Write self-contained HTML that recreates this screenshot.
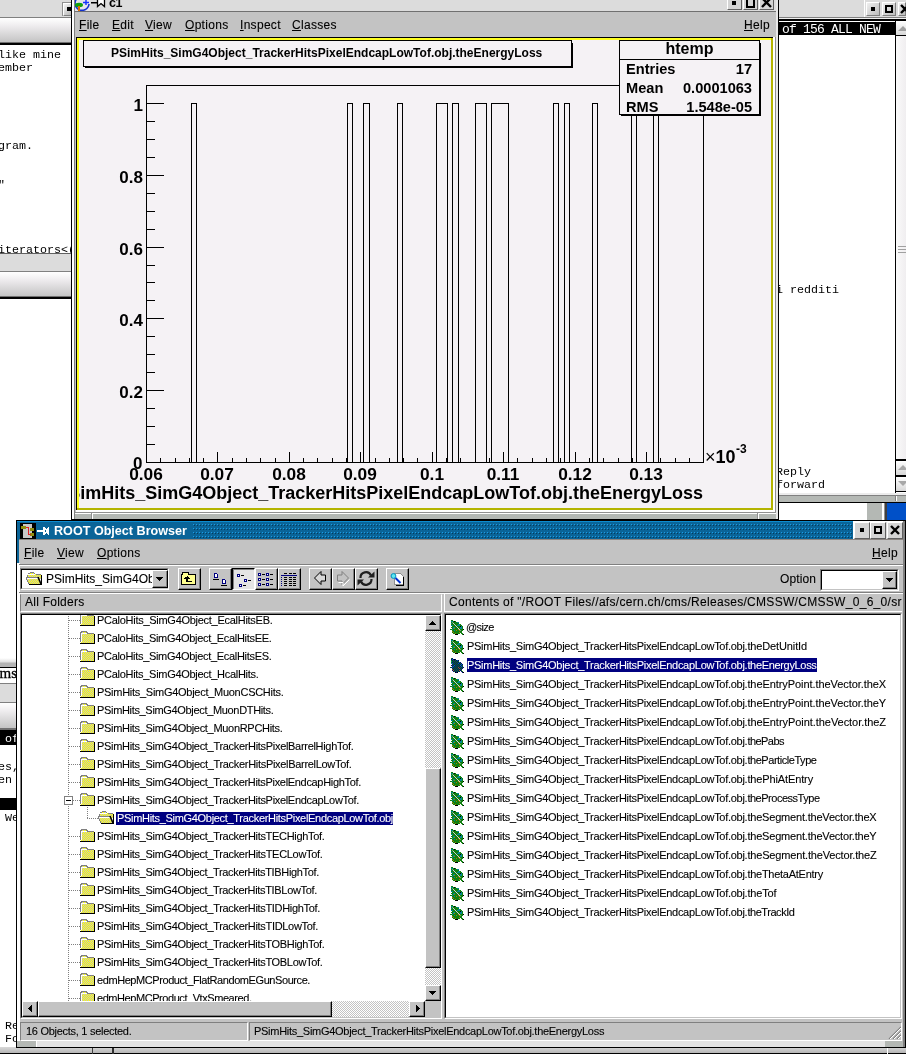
<!DOCTYPE html><html><head><meta charset="utf-8"><title>ROOT Object Browser</title><style>
html,body{margin:0;padding:0}
body{width:906px;height:1054px;overflow:hidden;background:#fff;position:relative;font-family:"Liberation Sans",sans-serif;font-size:12px;color:#000}
div,span,svg{position:absolute;box-sizing:border-box}
.t{white-space:pre;line-height:1}
.mono{font-family:"Liberation Mono",monospace;font-size:11.67px;white-space:pre;line-height:13px}
.ui{-webkit-text-stroke:0.1px currentColor;font-size:12px;white-space:pre;line-height:14px}
.li{-webkit-text-stroke:0.1px currentColor;font-size:11px;letter-spacing:-0.28px;white-space:pre;line-height:14px}
.b{font-weight:bold}
u{text-decoration:underline}
.btn{background:#c3c3c3;border:1px solid;border-color:#fff #000 #000 #fff;box-shadow:inset -1px -1px 0 #808080}
.btnp{border:1px solid;border-color:#000 #fff #fff #000;box-shadow:inset 1px 1px 0 #808080;background:#e4e4e4}
.sunk{border:1px solid;border-color:#808080 #fff #fff #808080;}
.sunk2{border:1px solid;border-color:#000 #c3c3c3 #c3c3c3 #000;background:#fff}
.wb{background:#d4d4d4;border:1px solid;border-color:#fff #606060 #606060 #fff}
</style></head><body><div style="left:0;top:0;width:906px;height:1054px;overflow:hidden;will-change:transform;background:#fff">
<div class="" style="left:0px;top:0px;width:72px;height:17px;background:#dcdcdc"></div>
<div class="" style="left:62px;top:2px;width:10px;height:14px;background:#909090"></div>
<div class="" style="left:63px;top:3px;width:9px;height:13px;background:linear-gradient(135deg,#f4f4f4,#b8b8b8);border:1px solid;border-color:#fff #808080 #808080 #fff"></div>
<div class="" style="left:67px;top:7px;width:5px;height:4px;background:#000"></div>
<div class="" style="left:0px;top:17px;width:72px;height:1px;background:#808080"></div>
<div class="" style="left:0px;top:18px;width:72px;height:24px;background:linear-gradient(#ffffff,#f0eef0 30%,#c4c4c4)"></div>
<div class="" style="left:0px;top:42px;width:72px;height:1px;background:#707070"></div>
<div class="" style="left:0px;top:43px;width:72px;height:2px;background:#000"></div>
<span class="mono" style="left:-2px;top:49px;">like mine</span>
<span class="mono" style="left:-2px;top:62px;">ember</span>
<span class="mono" style="left:-2px;top:140px;">gram.</span>
<span class="mono" style="left:-2px;top:179px;">"</span>
<span class="mono" style="left:-2px;top:244px;">iterators&lt;(</span>
<div class="" style="left:0px;top:253px;width:71px;height:1px;background:#606060"></div>
<div class="" style="left:0px;top:254px;width:71px;height:17px;background:#dcdcdc"></div>
<div class="" style="left:0px;top:271px;width:71px;height:1px;background:#808080"></div>
<div class="" style="left:0px;top:272px;width:71px;height:24px;background:linear-gradient(#ffffff,#f0eef0 30%,#c4c4c4)"></div>
<div class="" style="left:0px;top:296px;width:71px;height:1px;background:#707070"></div>
<div class="" style="left:0px;top:297px;width:71px;height:2px;background:#000"></div>
<div class="" style="left:0px;top:658px;width:16px;height:9px;background:linear-gradient(#ffffff,#e0e0e0 45%,#b4b4b4 55%,#b4b4b4)"></div>
<div class="" style="left:0px;top:667px;width:16px;height:1px;background:#000"></div>
<div style="left:0;top:668px;width:16px;height:15px;overflow:hidden"><span class="t" style="right:-1px;top:-2px;font-family:'Liberation Serif',serif;font-size:15px;-webkit-text-stroke:0.3px #000">ms</span></div>
<div class="" style="left:0px;top:683px;width:16px;height:1px;background:#808080"></div>
<div class="" style="left:0px;top:684px;width:16px;height:18px;background:#dcdcdc"></div>
<div class="" style="left:0px;top:702px;width:16px;height:1px;background:#808080"></div>
<div class="" style="left:0px;top:703px;width:16px;height:25px;background:linear-gradient(#ffffff,#f0eef0 30%,#c4c4c4)"></div>
<div class="" style="left:0px;top:728px;width:16px;height:2px;background:#707070"></div>
<div class="" style="left:0px;top:730px;width:16px;height:15px;background:#000"></div>
<span class="mono" style="left:5px;top:733px;color:#fff">of</span>
<span class="mono" style="left:-2px;top:761px;">es,</span>
<span class="mono" style="left:-2px;top:774px;">en</span>
<div class="" style="left:0px;top:798px;width:16px;height:12px;background:#000"></div>
<span class="mono" style="left:5px;top:812px;">We</span>
<span class="mono" style="left:5px;top:1020px;">Re</span>
<span class="mono" style="left:5px;top:1033px;">Fo</span>
<div class="" style="left:778px;top:0px;width:128px;height:17px;background:#dcdcdc"></div>
<div class="" style="left:864px;top:0px;width:1px;height:17px;background:#fff"></div>
<div class="" style="left:866px;top:2px;width:14px;height:14px;background:linear-gradient(135deg,#f0f0f0,#bcbcbc);border:1px solid;border-color:#fff #808080 #808080 #fff"></div>
<div class="" style="left:882px;top:2px;width:14px;height:14px;background:linear-gradient(135deg,#f0f0f0,#bcbcbc);border:1px solid;border-color:#fff #808080 #808080 #fff"></div>
<div class="" style="left:898px;top:2px;width:8px;height:14px;background:linear-gradient(135deg,#f0f0f0,#bcbcbc);border:1px solid;border-color:#fff #808080 #808080 #fff"></div>
<div class="" style="left:871px;top:7px;width:4px;height:4px;background:#000"></div>
<div class="" style="left:885px;top:5px;width:8px;height:8px;border:2px solid #000"></div>
<svg style="left:900px;top:4px" width="6" height="10"><path d="M1 1L9 9M9 1L1 9" stroke="#000" stroke-width="2.4"/></svg>
<div class="" style="left:778px;top:17px;width:128px;height:1px;background:#808080"></div>
<div class="" style="left:778px;top:18px;width:128px;height:1px;background:#f0f0f0"></div>
<div class="" style="left:778px;top:19px;width:128px;height:2px;background:#000"></div>
<div class="" style="left:779px;top:21px;width:116px;height:1px;background:#fff"></div>
<div class="" style="left:778px;top:22px;width:117px;height:13px;background:#000"></div>
<span class="mono" style="left:782px;top:22.5px;color:#fff;font-size:13px;letter-spacing:-0.8px">of 156 ALL NEW</span>
<div class="" style="left:778px;top:21px;width:1px;height:482px;background:#000"></div>
<div class="" style="left:895px;top:21px;width:1px;height:475px;background:#000"></div>
<div class="" style="left:896px;top:21px;width:10px;height:475px;background:linear-gradient(90deg,#fafafa,#f0eef0)"></div>
<div class="" style="left:896px;top:21px;width:10px;height:15px;background:linear-gradient(#fff,#d8d8d8);border-bottom:1px solid #000"></div>
<svg style="left:898px;top:26px" width="8" height="5"><path d="M0 5L5 0L10 5z" fill="#a0a0a0"/></svg>
<span class="mono" style="left:776px;top:283.5px;">i redditi</span>
<span class="mono" style="left:776px;top:465.5px;">Reply</span>
<span class="mono" style="left:776px;top:478.5px;">forward</span>
<div class="" style="left:898px;top:246px;width:8px;height:1px;background:#a0a0a0"></div>
<div class="" style="left:898px;top:249px;width:8px;height:1px;background:#a0a0a0"></div>
<div class="" style="left:898px;top:252px;width:8px;height:1px;background:#a0a0a0"></div>
<div class="" style="left:896px;top:459px;width:10px;height:2px;background:#000"></div>
<div class="" style="left:896px;top:461px;width:10px;height:14px;background:linear-gradient(#fff,#d8d8d8)"></div>
<svg style="left:898px;top:465px" width="8" height="6"><path d="M0 5L5 0L10 5z" fill="#a8a8a8"/></svg>
<div class="" style="left:896px;top:475px;width:10px;height:2px;background:#000"></div>
<div class="" style="left:896px;top:477px;width:10px;height:14px;background:linear-gradient(#fff,#d8d8d8)"></div>
<svg style="left:898px;top:481px" width="8" height="6"><path d="M0 0L5 5L10 0z" fill="#a8a8a8"/></svg>
<div class="" style="left:896px;top:491px;width:10px;height:1px;background:#000"></div>
<div class="" style="left:896px;top:492px;width:10px;height:2px;background:#fff"></div>
<div class="" style="left:778px;top:493px;width:128px;height:2px;background:#ececec"></div>
<div class="" style="left:778px;top:495px;width:128px;height:1px;background:#808080"></div>
<div class="" style="left:778px;top:496px;width:128px;height:6px;background:#b4b8b4"></div>
<div class="" style="left:895px;top:496px;width:1px;height:5px;background:#808080"></div>
<div class="" style="left:896px;top:496px;width:1px;height:5px;background:#fff"></div>
<div class="" style="left:778px;top:502px;width:128px;height:1px;background:#000"></div>
<div class="" style="left:778px;top:503px;width:89px;height:17px;background:#fff"></div>
<div class="" style="left:867px;top:503px;width:15px;height:17px;background:#b4b8b4"></div>
<div class="" style="left:882px;top:503px;width:2px;height:17px;background:#fff"></div>
<div class="" style="left:884px;top:503px;width:1px;height:17px;background:#909090"></div>
<div class="" style="left:885px;top:503px;width:2px;height:17px;background:#404040"></div>
<div class="" style="left:887px;top:503px;width:19px;height:17px;background:#0050c8"></div>
<div class="" style="left:71px;top:0px;width:708px;height:520px;background:#c3c3c3"></div>
<div class="" style="left:71px;top:0px;width:1px;height:520px;background:#000"></div>
<div class="" style="left:72px;top:0px;width:2px;height:519px;background:#fff"></div>
<div class="" style="left:74px;top:0px;width:1px;height:519px;background:#808080"></div>
<div class="" style="left:778px;top:0px;width:1px;height:520px;background:#000"></div>
<div class="" style="left:776px;top:0px;width:2px;height:519px;background:#e8e8e8"></div>
<div class="" style="left:75px;top:0px;width:701px;height:11px;background:#dcdcdc"></div>
<div class="" style="left:74px;top:11px;width:702px;height:1px;background:#707070"></div>
<div class="" style="left:75px;top:12px;width:701px;height:25px;background:#c3c3c3"></div>
<svg style="left:75px;top:0px" width="32" height="11"><rect x="0" y="0" width="15" height="11" fill="#e4e4ec"/><path d="M4 -3a7 7 0 1 0 10 7" fill="none" stroke="#1030d0" stroke-width="1.6"/><path d="M8 2.500h6M11 0v5" stroke="#1030ff" stroke-width="1.4"/><ellipse cx="4" cy="5" rx="4" ry="2.200" fill="#10a010"/><rect x="3" y="6" width="2" height="5" fill="#e07000"/><rect x="16" y="2" width="6" height="1.500" fill="#000"/><path d="M22.500 -1v7.500l3.500-3 3.500 3v-7.500" fill="#fff" stroke="#000" stroke-width="1.300"/></svg>
<span class="t b" style="left:109px;top:-3px;font-size:12.5px;letter-spacing:-0.5px">c1</span>
<div class="wb" style="left:727px;top:-4px;width:15px;height:14px;"></div>
<div class="wb" style="left:743px;top:-4px;width:15px;height:14px;"></div>
<div class="wb" style="left:759px;top:-4px;width:15px;height:14px;"></div>
<div class="" style="left:732px;top:1px;width:4px;height:4px;background:#000"></div>
<div class="" style="left:746px;top:-2px;width:9px;height:10px;border:2px solid #000"></div>
<svg style="left:761px;top:-1px" width="11" height="10"><path d="M1 -1L10 8M10 -1L1 8" stroke="#000" stroke-width="2.4"/></svg>
<span class="ui" style="left:79px;top:18px;letter-spacing:0.3px"><u>F</u>ile</span>
<span class="ui" style="left:112px;top:18px;letter-spacing:0.3px"><u>E</u>dit</span>
<span class="ui" style="left:145px;top:18px;letter-spacing:0.3px"><u>V</u>iew</span>
<span class="ui" style="left:185px;top:18px;letter-spacing:0.3px"><u>O</u>ptions</span>
<span class="ui" style="left:240px;top:18px;letter-spacing:0.3px"><u>I</u>nspect</span>
<span class="ui" style="left:292px;top:18px;letter-spacing:0.3px"><u>C</u>lasses</span>
<span class="ui" style="left:744px;top:18px;letter-spacing:0.3px"><u>H</u>elp</span>
<div class="" style="left:76px;top:37px;width:699px;height:475px;background:#fff"></div>
<div class="" style="left:76px;top:37px;width:697px;height:473px;background:#000"></div>
<div class="" style="left:77px;top:38px;width:696px;height:472px;background:#b4b400"></div>
<div class="" style="left:77px;top:38px;width:694px;height:470px;background:#ffff20"></div>
<svg style="left:769px;top:36px" width="6" height="6" shape-rendering="crispEdges"><path d="M4 2v2h-2z" fill="#b4b400"/></svg>
<svg style="left:75px;top:506px" width="6" height="6" shape-rendering="crispEdges"><path d="M2 4h2v-2z" fill="#b4b400"/></svg>
<div class="" style="left:79px;top:40px;width:692px;height:468px;background:#f5f2f5"></div>
<div class="" style="left:75px;top:512px;width:701px;height:1px;background:#909090"></div>
<div class="" style="left:75px;top:513px;width:701px;height:1px;background:#fff"></div>
<div class="" style="left:75px;top:514px;width:701px;height:5px;background:#b4b8b4"></div>
<div class="" style="left:91px;top:513px;width:1px;height:6px;background:#909090"></div>
<div class="" style="left:92px;top:513px;width:1px;height:6px;background:#fff"></div>
<div class="" style="left:757px;top:513px;width:1px;height:6px;background:#909090"></div>
<div class="" style="left:758px;top:513px;width:1px;height:6px;background:#fff"></div>
<div class="" style="left:775px;top:37px;width:1px;height:476px;background:#909090"></div>
<div class="" style="left:71px;top:519px;width:708px;height:1px;background:#000"></div>
<div class="" style="left:85px;top:43px;width:488px;height:25px;background:#000"></div>
<div class="" style="left:83px;top:40px;width:489px;height:27px;background:#f5f2f5;border:1px solid #000"></div>
<span class="t b" style="left:111px;top:47px;font-size:12px">PSimHits_SimG4Object_TrackerHitsPixelEndcapLowTof.obj.theEnergyLoss</span>
<svg style="left:0;top:0" width="906" height="520" shape-rendering="crispEdges" fill="none" stroke="#000" stroke-width="1"><rect x="146.500" y="85.500" width="557" height="377"/><path d="M191.5 462.5V103.5H196.5V462.5"/><path d="M347.5 462.5V103.5H352.5V462.5"/><path d="M363.5 462.5V103.5H369.5V462.5"/><path d="M397.5 462.5V103.5H402.5V462.5"/><path d="M436.5 462.5V103.5H447.5V462.5"/><path d="M452.5 462.5V103.5H458.5V462.5"/><path d="M475.5 462.5V103.5H486.5V462.5"/><path d="M491.5 462.5V103.5H508.5V462.5"/><path d="M553.5 462.5V103.5H558.5V462.5"/><path d="M564.5 462.5V103.5H569.5V462.5"/><path d="M592.5 462.5V103.5H597.5V462.5"/><path d="M631.5 462.5V103.5H636.5V462.5"/><path d="M653.5 462.5V103.5H658.5V462.5"/><path d="M146.500 462.5h17"/><path d="M146.500 444.5h8"/><path d="M146.500 426.5h8"/><path d="M146.500 408.5h8"/><path d="M146.500 390.5h17"/><path d="M146.500 372.5h8"/><path d="M146.500 354.5h8"/><path d="M146.500 336.5h8"/><path d="M146.500 318.5h17"/><path d="M146.500 300.5h8"/><path d="M146.500 282.5h8"/><path d="M146.500 265.5h8"/><path d="M146.500 247.5h17"/><path d="M146.500 229.5h8"/><path d="M146.500 211.5h8"/><path d="M146.500 193.5h8"/><path d="M146.500 175.5h17"/><path d="M146.500 157.5h8"/><path d="M146.500 139.5h8"/><path d="M146.500 121.5h8"/><path d="M146.500 103.5h17"/><path d="M146.5 462.500v-11"/><path d="M160.5 462.500v-5"/><path d="M175.5 462.500v-5"/><path d="M189.5 462.500v-5"/><path d="M203.5 462.500v-5"/><path d="M217.5 462.500v-11"/><path d="M232.5 462.500v-5"/><path d="M246.5 462.500v-5"/><path d="M260.5 462.500v-5"/><path d="M275.5 462.500v-5"/><path d="M289.5 462.500v-11"/><path d="M303.5 462.500v-5"/><path d="M317.5 462.500v-5"/><path d="M332.5 462.500v-5"/><path d="M346.5 462.500v-5"/><path d="M360.5 462.500v-11"/><path d="M375.5 462.500v-5"/><path d="M389.5 462.500v-5"/><path d="M403.5 462.500v-5"/><path d="M417.5 462.500v-5"/><path d="M432.5 462.500v-11"/><path d="M446.5 462.500v-5"/><path d="M460.5 462.500v-5"/><path d="M475.5 462.500v-5"/><path d="M489.5 462.500v-5"/><path d="M503.5 462.500v-11"/><path d="M517.5 462.500v-5"/><path d="M532.5 462.500v-5"/><path d="M546.5 462.500v-5"/><path d="M560.5 462.500v-5"/><path d="M575.5 462.500v-11"/><path d="M589.5 462.500v-5"/><path d="M603.5 462.500v-5"/><path d="M618.5 462.500v-5"/><path d="M632.5 462.500v-5"/><path d="M646.5 462.500v-11"/><path d="M660.5 462.500v-5"/><path d="M675.5 462.500v-5"/><path d="M689.5 462.500v-5"/></svg>
<span class="t b" style="left:133px;top:455px;font-size:17px">0</span>
<span class="t b" style="right:763px;top:384px;font-size:17px">0.2</span>
<span class="t b" style="right:763px;top:312px;font-size:17px">0.4</span>
<span class="t b" style="right:763px;top:241px;font-size:17px">0.6</span>
<span class="t b" style="right:763px;top:169px;font-size:17px">0.8</span>
<span class="t b" style="right:763px;top:97px;font-size:17px">1</span>
<span class="t b" style="left:96px;width:100px;text-align:center;top:466px;font-size:17.3px">0.06</span>
<span class="t b" style="left:167px;width:100px;text-align:center;top:466px;font-size:17.3px">0.07</span>
<span class="t b" style="left:239px;width:100px;text-align:center;top:466px;font-size:17.3px">0.08</span>
<span class="t b" style="left:310px;width:100px;text-align:center;top:466px;font-size:17.3px">0.09</span>
<span class="t b" style="left:382px;width:100px;text-align:center;top:466px;font-size:17.3px">0.1</span>
<span class="t b" style="left:453px;width:100px;text-align:center;top:466px;font-size:17.3px">0.11</span>
<span class="t b" style="left:525px;width:100px;text-align:center;top:466px;font-size:17.3px">0.12</span>
<span class="t b" style="left:596px;width:100px;text-align:center;top:466px;font-size:17.3px">0.13</span>
<span class="t b" style="left:705px;top:448px;font-size:18px"><em style="font-style:normal;font-weight:normal;font-size:18px">×</em>10</span>
<span class="t b" style="left:736px;top:443px;font-size:12px">-3</span>
<div style="left:79px;top:480px;width:692px;height:28px;overflow:hidden"><span class="t b" style="right:68px;top:4px;font-size:18px">PSimHits_SimG4Object_TrackerHitsPixelEndcapLowTof.obj.theEnergyLoss</span></div>
<div class="" style="left:621px;top:43px;width:140px;height:73px;background:#000"></div>
<div class="" style="left:619px;top:40px;width:141px;height:75px;background:#f5f2f5;border:1px solid #000"></div>
<div class="" style="left:619px;top:59px;width:141px;height:1px;background:#000"></div>
<span class="t b" style="left:619px;width:141px;text-align:center;top:41px;font-size:16px">htemp</span>
<span class="t b" style="left:626px;top:62px;font-size:14.6px">Entries</span>
<span class="t b" style="right:154px;top:62px;font-size:14.6px">17</span>
<span class="t b" style="left:626px;top:81px;font-size:14.6px">Mean</span>
<span class="t b" style="right:154px;top:81px;font-size:14.6px">0.0001063</span>
<span class="t b" style="left:626px;top:100px;font-size:14.6px">RMS</span>
<span class="t b" style="right:154px;top:100px;font-size:14.6px">1.548e-05</span>
<div class="" style="left:0px;top:1047px;width:906px;height:7px;background:linear-gradient(#d8d8d8,#b0b0b0)"></div>
<div class="" style="left:0px;top:1053px;width:906px;height:1px;background:#000"></div>
<div class="" style="left:92px;top:1048px;width:1px;height:6px;background:#404040"></div>
<div class="" style="left:112px;top:1048px;width:2px;height:6px;background:#303030"></div>
<div class="" style="left:887px;top:1048px;width:1px;height:6px;background:#fff"></div>
<div class="" style="left:16px;top:520px;width:890px;height:528px;background:#c3c3c3;border:1px solid #000"></div>
<div class="" style="left:17px;top:521px;width:2px;height:42px;background:#0a6498"></div>
<div class="" style="left:17px;top:563px;width:3px;height:484px;background:#fff"></div>
<div class="" style="left:903px;top:521px;width:2px;height:526px;background:#808080"></div>
<div class="" style="left:17px;top:1041px;width:886px;height:6px;background:#e4e4e4"></div>
<div class="" style="left:17px;top:1041px;width:19px;height:6px;background:#b4b8b4"></div>
<div class="" style="left:36px;top:1041px;width:1px;height:6px;background:#fff"></div>
<div class="" style="left:885px;top:1041px;width:18px;height:6px;background:#b4b8b4"></div>
<div class="" style="left:16px;top:1047px;width:890px;height:1px;background:#000"></div>
<div class="" style="left:17px;top:521px;width:886px;height:1px;background:#0c8cd0"></div>
<div class="" style="left:19px;top:522px;width:884px;height:17px;background:#0a6498"></div>
<div class="" style="left:19px;top:539px;width:884px;height:1px;background:#8a8480"></div>
<svg style="left:193px;top:524px" width="660" height="15" shape-rendering="crispEdges"><defs><pattern id="tdots" width="3" height="4" patternUnits="userSpaceOnUse"><rect x="0" y="0" width="1" height="1" fill="#1c9ce4"/><rect x="1" y="1" width="1" height="1" fill="#063c5c"/></pattern></defs><rect width="660" height="15" fill="url(#tdots)"/></svg>
<svg style="left:20px;top:523px" width="30" height="16" shape-rendering="crispEdges"><rect x="0" y="0" width="16" height="16" fill="#000"/><rect x="3" y="1" width="9" height="14" fill="#c8c8c8"/><rect x="1" y="3" width="5" height="3" fill="#909010"/><rect x="10" y="5" width="4" height="3" fill="#909010"/><rect x="10" y="10" width="4" height="3" fill="#909010"/><path d="M6 4.500h2.500v7h2" stroke="#e02020" fill="none"/><rect x="17" y="7" width="6" height="2" fill="#fff"/><path d="M23 4h2v1h1v1h1v-1h1v-1h1v8h-1v-1h-1v-1h-1v1h-1v1h-2z M25 7v2h1v-2z" fill="#fff" fill-rule="evenodd"/></svg>
<span class="t b" style="left:54px;top:525px;font-size:12.6px;color:#fff">ROOT Object Browser</span>
<div class="" style="left:853px;top:521px;width:50px;height:18px;background:#dcdcdc;border-left:1px solid #fff;border-top:1px solid #fff"></div>
<div class="wb" style="left:854px;top:522px;width:16px;height:17px;"></div>
<div class="wb" style="left:870px;top:522px;width:16px;height:17px;"></div>
<div class="wb" style="left:887px;top:522px;width:16px;height:17px;"></div>
<div class="" style="left:860px;top:528px;width:4px;height:4px;background:#000"></div>
<div class="" style="left:874px;top:526px;width:8px;height:8px;border:2px solid #000"></div>
<svg style="left:890px;top:525px" width="10" height="10"><path d="M1 1L9 9M9 1L1 9" stroke="#000" stroke-width="2.4"/></svg>
<span class="ui" style="left:24px;top:546px;letter-spacing:0.3px"><u>F</u>ile</span>
<span class="ui" style="left:57px;top:546px;letter-spacing:0.3px"><u>V</u>iew</span>
<span class="ui" style="left:97px;top:546px;letter-spacing:0.3px"><u>O</u>ptions</span>
<span class="ui" style="left:872px;top:546px;letter-spacing:0.3px"><u>H</u>elp</span>
<div class="" style="left:19px;top:564px;width:884px;height:1px;background:#808080"></div>
<div class="" style="left:19px;top:565px;width:884px;height:1px;background:#fff"></div>
<div class="sunk" style="left:20px;top:568px;width:149px;height:22px;"></div>
<div class="sunk2" style="left:21px;top:569px;width:147px;height:20px;"></div>
<div style="left:22px;top:570px;width:130px;height:18px;overflow:hidden;background:#fff"><span class="ui" style="left:24px;top:2px;letter-spacing:0px">PSimHits_SimG4Object_TrackerHitsPixelEndcapLowTof.obj</span></div>
<div class="btn" style="left:152px;top:570px;width:16px;height:18px;"></div>
<svg style="left:156px;top:577px" width="8" height="4" shape-rendering="crispEdges"><path d="M0 0h7l-3.500 4z" fill="#000"/></svg>
<div class="btn" style="left:178px;top:568px;width:23px;height:22px;"></div>
<div class="btn" style="left:209px;top:568px;width:23px;height:22px;"></div>
<div class="btn" style="left:255px;top:568px;width:23px;height:22px;"></div>
<div class="btn" style="left:278px;top:568px;width:23px;height:22px;"></div>
<div class="btn" style="left:309px;top:568px;width:23px;height:22px;"></div>
<div class="btn" style="left:332px;top:568px;width:23px;height:22px;"></div>
<div class="btn" style="left:355px;top:568px;width:23px;height:22px;"></div>
<div class="btn" style="left:386px;top:568px;width:23px;height:22px;"></div>
<div class="btnp" style="left:232px;top:568px;width:23px;height:22px;"></div>
<svg style="left:0;top:0" width="906" height="600" shape-rendering="crispEdges"><path d="M181.500 584.500v-10h1v-2h6v2h7v10z" fill="#ffff90" stroke="#000"/><path d="M187 576h1v1h1v1h1v1h-2v2h4v1h-6v-3h-2v-1h1v-1h1z" fill="#000"/><path d="M214.500 573.500h2l1 1v3h-3z" fill="#fff" stroke="#000080" stroke-width="1"/><rect x="213" y="579" width="6" height="1" fill="#000"/><path d="M222.500 579.500h2l1 1v3h-3z" fill="#fff" stroke="#000080" stroke-width="1"/><rect x="221" y="585" width="6" height="1" fill="#000"/><rect x="237.500" y="574.500" width="2" height="2" fill="#fff" stroke="#000080"/><rect x="241" y="575" width="3" height="1" fill="#000"/><rect x="244.500" y="579.500" width="2" height="2" fill="#fff" stroke="#000080"/><rect x="248" y="580" width="3" height="1" fill="#000"/><rect x="239.500" y="584.500" width="2" height="2" fill="#fff" stroke="#000080"/><rect x="243" y="585" width="3" height="1" fill="#000"/><rect x="258.500" y="573.500" width="2" height="2" fill="#fff" stroke="#000080"/><rect x="262" y="574" width="3" height="1" fill="#000"/><rect x="266.500" y="573.500" width="2" height="2" fill="#fff" stroke="#000080"/><rect x="270" y="574" width="3" height="1" fill="#000"/><rect x="258.500" y="578.500" width="2" height="2" fill="#fff" stroke="#000080"/><rect x="262" y="579" width="3" height="1" fill="#000"/><rect x="266.500" y="578.500" width="2" height="2" fill="#fff" stroke="#000080"/><rect x="270" y="579" width="3" height="1" fill="#000"/><rect x="258.500" y="583.500" width="2" height="2" fill="#fff" stroke="#000080"/><rect x="262" y="584" width="3" height="1" fill="#000"/><rect x="266.500" y="583.500" width="2" height="2" fill="#fff" stroke="#000080"/><rect x="270" y="584" width="3" height="1" fill="#000"/><rect x="284" y="573" width="3" height="1" fill="#000"/><rect x="289" y="573" width="3" height="1" fill="#000"/><rect x="293" y="573" width="3" height="1" fill="#000"/><rect x="281" y="575" width="16" height="1" fill="#000080"/><rect x="281" y="577" width="1" height="1" fill="#000080"/><rect x="284" y="577" width="3" height="1" fill="#000"/><rect x="289" y="577" width="3" height="1" fill="#000"/><rect x="293" y="577" width="3" height="1" fill="#000"/><rect x="281" y="579" width="1" height="1" fill="#000080"/><rect x="284" y="579" width="3" height="1" fill="#000"/><rect x="289" y="579" width="3" height="1" fill="#000"/><rect x="293" y="579" width="3" height="1" fill="#000"/><rect x="281" y="581" width="1" height="1" fill="#000080"/><rect x="284" y="581" width="3" height="1" fill="#000"/><rect x="289" y="581" width="3" height="1" fill="#000"/><rect x="293" y="581" width="3" height="1" fill="#000"/><rect x="281" y="583" width="1" height="1" fill="#000080"/><rect x="284" y="583" width="3" height="1" fill="#000"/><rect x="289" y="583" width="3" height="1" fill="#000"/><rect x="293" y="583" width="3" height="1" fill="#000"/><rect x="281" y="585" width="1" height="1" fill="#000080"/><rect x="284" y="585" width="3" height="1" fill="#000"/><rect x="289" y="585" width="3" height="1" fill="#000"/><rect x="293" y="585" width="3" height="1" fill="#000"/><path d="M314.500 578l6.500-6.500v3.500h4.500v6h-4.500v3.500z" fill="#d8d8d8" stroke="#000" shape-rendering="auto"/><path d="M348.500 578l-6.500-6.500v3.500h-4.500v6h4.500v3.500z" fill="#c3c3c3" stroke="#808080" shape-rendering="auto"/><path d="M337.500 581.500h4.500v3.500l6.500-6.500" fill="none" stroke="#fff" shape-rendering="auto" transform="translate(1,1)"/><g shape-rendering="auto" fill="none" stroke="#202020" stroke-width="2.200"><path d="M360.500 578a5.500 5.500 0 0 1 10.500-2.500"/><path d="M371.500 579a5.500 5.500 0 0 1 -10.500 2.500"/></g><path d="M368 577.500h6.500v-6z M364 579.500h-6.500v6z" fill="#202020" shape-rendering="auto"/><path d="M394.500 573.500h6l3 3v8h-9z" fill="#fff" stroke="#909090"/><path d="M403.500 577v8.500h-8" fill="none" stroke="#000"/><circle cx="393.500" cy="576" r="2.400" fill="#60e8f0" stroke="#0090c0" shape-rendering="auto"/><path d="M395.500 578l5 5" stroke="#0030d0" stroke-width="2" shape-rendering="auto"/></svg>
<span class="ui" style="left:780px;top:572px;letter-spacing:0.1px">Option</span>
<div class="sunk" style="left:820px;top:569px;width:79px;height:22px;"></div>
<div class="sunk2" style="left:821px;top:570px;width:77px;height:20px;"></div>
<div class="btn" style="left:882px;top:571px;width:15px;height:18px;"></div>
<svg style="left:886px;top:578px" width="8" height="4" shape-rendering="crispEdges"><path d="M0 0h7l-3.500 4z" fill="#000"/></svg>
<div class="" style="left:19px;top:592px;width:884px;height:1px;background:#808080"></div>
<div class="" style="left:19px;top:593px;width:884px;height:1px;background:#fff"></div>
<div class="" style="left:20px;top:594px;width:422px;height:18px;background:#c3c3c3;border:1px solid;border-color:#c3c3c3 #fff #fff #808080"></div>
<span class="ui" style="left:25px;top:595px;letter-spacing:0.25px">All Folders</span>
<div style="left:444px;top:594px;width:458px;height:18px;overflow:hidden;border-bottom:1px solid #fff"><div style="left:0;top:0;width:1px;height:18px;background:#fff"></div><span class="ui" style="left:5px;top:1px;letter-spacing:0.3px">Contents of "/ROOT Files//afs/cern.ch/cms/Releases/CMSSW/CMSSW_0_6_0/src</span></div>
<div class="sunk" style="left:20px;top:613px;width:422px;height:406px;"></div>
<div class="sunk2" style="left:21px;top:614px;width:420px;height:404px;"></div>
<svg width="0" height="0" style="left:0;top:0"><defs><pattern id="dy" width="2" height="2" patternUnits="userSpaceOnUse"><rect width="2" height="2" fill="#ffff00"/><rect width="1" height="1" fill="#c4c4c0"/><rect x="1" y="1" width="1" height="1" fill="#c4c4c0"/></pattern><pattern id="nv" width="2" height="2" patternUnits="userSpaceOnUse"><rect width="1" height="1" fill="#000080"/><rect x="1" y="1" width="1" height="1" fill="#000080"/></pattern><g id="fclosed" shape-rendering="crispEdges"><path d="M0.500 12V3.500l1-2h5l1 2h6V12" fill="url(#dy)" stroke="#808080"/><rect x="1" y="4" width="13" height="9" fill="url(#dy)"/><path d="M1 3.500h6M1.500 3v9" stroke="#fff"/><path d="M14.500 4v9.500H0" fill="none" stroke="#000"/></g><g id="fopen" shape-rendering="crispEdges"><path d="M3 7V4l2-2h4l2 2h5v4z" fill="url(#dy)"/><path d="M3 3.500h7" stroke="#fff"/><path d="M2.500 7V3.500M3.500 2.500h1M4.500 1.500h4M9.500 2.500h-1M10.500 3.500h5" stroke="#808080" fill="none"/><rect x="3" y="2" width="1" height="1" fill="#808080"/><rect x="9" y="2" width="1" height="1" fill="#808080"/><path d="M1 6h12l3 7H4z" fill="url(#dy)"/><path d="M2 7.500h11" stroke="#fff"/><path d="M1 6.500h12" stroke="#808080"/><path d="M1.500 7v2M2.500 9v2M3.500 11v2" stroke="#808080"/><path d="M13 6l3 7" stroke="#000" stroke-width="1.600" shape-rendering="auto"/><path d="M16.500 4v10M4 13.500h13" stroke="#000"/></g><g id="leaf" shape-rendering="crispEdges"><rect x="1" y="0" width="2" height="1" fill="#108010"/><rect x="1" y="1" width="5" height="1" fill="#108010"/><rect x="1" y="2" width="8" height="1" fill="#108010"/><rect x="2" y="3" width="7" height="1" fill="#108010"/><rect x="1" y="4" width="10" height="1" fill="#108010"/><rect x="2" y="5" width="10" height="1" fill="#108010"/><rect x="2" y="6" width="11" height="1" fill="#108010"/><rect x="1" y="7" width="12" height="1" fill="#108010"/><rect x="2" y="8" width="11" height="1" fill="#108010"/><rect x="0" y="9" width="14" height="1" fill="#108010"/><rect x="2" y="10" width="11" height="1" fill="#108010"/><rect x="2" y="11" width="10" height="1" fill="#108010"/><rect x="2" y="12" width="9" height="1" fill="#108010"/><rect x="3" y="13" width="7" height="1" fill="#108010"/><rect x="5" y="14" width="3" height="1" fill="#000"/><rect x="1" y="1" width="2" height="1" fill="#008890"/><rect x="7" y="2" width="2" height="1" fill="#008890"/><rect x="1" y="3" width="1" height="1" fill="#008890"/><rect x="8" y="4" width="2" height="2" fill="#008890"/><rect x="1" y="5" width="2" height="1" fill="#008890"/><rect x="10" y="6" width="2" height="3" fill="#008890"/><rect x="3" y="7" width="2" height="2" fill="#008890"/><rect x="2" y="9" width="1" height="1" fill="#008890"/><rect x="4" y="10" width="1" height="1" fill="#008890"/><rect x="7" y="5" width="1" height="1" fill="#008890"/><rect x="4" y="1" width="1" height="1" fill="#000"/><rect x="10" y="6" width="1" height="1" fill="#000"/><rect x="13" y="9" width="1" height="1" fill="#000"/><rect x="5" y="5" width="1" height="1" fill="#a08000"/><rect x="4" y="8" width="1" height="1" fill="#a08000"/><rect x="9" y="10" width="1" height="1" fill="#a08000"/><rect x="3" y="12" width="1" height="1" fill="#a08000"/><rect x="6" y="10" width="1" height="1" fill="#a08000"/><rect x="9" y="12" width="1" height="1" fill="#a08000"/><rect x="7" y="7" width="1" height="1" fill="#a08000"/><rect x="2" y="11" width="1" height="1" fill="#a08000"/><rect x="5" y="13" width="1" height="1" fill="#a08000"/><rect x="8" y="9" width="1" height="1" fill="#a08000"/><path d="M2.500 2.500l8 8" stroke="#d0d0dc" stroke-width="1" shape-rendering="auto"/><path d="M11 11h1v2h1v1h1v1h-2v-1h-1z" fill="#108010"/><rect x="13" y="14" width="1" height="1" fill="#000"/></g><g id="leafsel" shape-rendering="crispEdges"><rect x="1" y="0" width="2" height="1" fill="#108010"/><rect x="1" y="1" width="5" height="1" fill="#108010"/><rect x="1" y="2" width="8" height="1" fill="#108010"/><rect x="2" y="3" width="7" height="1" fill="#108010"/><rect x="1" y="4" width="10" height="1" fill="#108010"/><rect x="2" y="5" width="10" height="1" fill="#108010"/><rect x="2" y="6" width="11" height="1" fill="#108010"/><rect x="1" y="7" width="12" height="1" fill="#108010"/><rect x="2" y="8" width="11" height="1" fill="#108010"/><rect x="0" y="9" width="14" height="1" fill="#108010"/><rect x="2" y="10" width="11" height="1" fill="#108010"/><rect x="2" y="11" width="10" height="1" fill="#108010"/><rect x="2" y="12" width="9" height="1" fill="#108010"/><rect x="3" y="13" width="7" height="1" fill="#108010"/><rect x="5" y="14" width="3" height="1" fill="#000"/><rect x="1" y="1" width="2" height="1" fill="#008890"/><rect x="7" y="2" width="2" height="1" fill="#008890"/><rect x="1" y="3" width="1" height="1" fill="#008890"/><rect x="8" y="4" width="2" height="2" fill="#008890"/><rect x="1" y="5" width="2" height="1" fill="#008890"/><rect x="10" y="6" width="2" height="3" fill="#008890"/><rect x="3" y="7" width="2" height="2" fill="#008890"/><rect x="2" y="9" width="1" height="1" fill="#008890"/><rect x="4" y="10" width="1" height="1" fill="#008890"/><rect x="7" y="5" width="1" height="1" fill="#008890"/><rect x="4" y="1" width="1" height="1" fill="#000"/><rect x="10" y="6" width="1" height="1" fill="#000"/><rect x="13" y="9" width="1" height="1" fill="#000"/><rect x="5" y="5" width="1" height="1" fill="#a08000"/><rect x="4" y="8" width="1" height="1" fill="#a08000"/><rect x="9" y="10" width="1" height="1" fill="#a08000"/><rect x="3" y="12" width="1" height="1" fill="#a08000"/><rect x="6" y="10" width="1" height="1" fill="#a08000"/><rect x="9" y="12" width="1" height="1" fill="#a08000"/><rect x="7" y="7" width="1" height="1" fill="#a08000"/><rect x="2" y="11" width="1" height="1" fill="#a08000"/><rect x="5" y="13" width="1" height="1" fill="#a08000"/><rect x="8" y="9" width="1" height="1" fill="#a08000"/><path d="M2.500 2.500l8 8" stroke="#d0d0dc" stroke-width="1" shape-rendering="auto"/><path d="M11 11h1v2h1v1h1v1h-2v-1h-1z" fill="#108010"/><rect x="13" y="14" width="1" height="1" fill="#000"/><rect x="1" y="0" width="2" height="1" fill="url(#nv)"/><rect x="1" y="1" width="5" height="1" fill="url(#nv)"/><rect x="1" y="2" width="8" height="1" fill="url(#nv)"/><rect x="2" y="3" width="7" height="1" fill="url(#nv)"/><rect x="1" y="4" width="10" height="1" fill="url(#nv)"/><rect x="2" y="5" width="10" height="1" fill="url(#nv)"/><rect x="2" y="6" width="11" height="1" fill="url(#nv)"/><rect x="1" y="7" width="12" height="1" fill="url(#nv)"/><rect x="2" y="8" width="11" height="1" fill="url(#nv)"/><rect x="0" y="9" width="14" height="1" fill="url(#nv)"/><rect x="2" y="10" width="11" height="1" fill="url(#nv)"/><rect x="2" y="11" width="10" height="1" fill="url(#nv)"/><rect x="2" y="12" width="9" height="1" fill="url(#nv)"/><rect x="3" y="13" width="7" height="1" fill="url(#nv)"/><rect x="5" y="14" width="3" height="1" fill="url(#nv)"/><path d="M11 11h1v2h1v1h1v1h-2v-1h-1z" fill="url(#nv)"/></g></defs></svg>
<svg style="left:25px;top:571px" width="18" height="15"><use href="#fopen"/></svg>
<div style="left:22px;top:615px;width:403px;height:386px;overflow:hidden;background:#fff"><div class="" style="left:46px;top:-1px;width:1px;height:390px;background-image:linear-gradient(#808080 50%,transparent 50%);background-size:1px 2px"></div><div class="" style="left:47px;top:5px;width:11px;height:1px;background-image:linear-gradient(90deg,#808080 50%,transparent 50%);background-size:2px 1px"></div><svg style="left:58px;top:-3px" width="16" height="14"><use href="#fclosed"/></svg><span class="li" style="left:75px;top:-2px;letter-spacing:-0.277px">PCaloHits_SimG4Object_EcalHitsEB.</span><div class="" style="left:47px;top:23px;width:11px;height:1px;background-image:linear-gradient(90deg,#808080 50%,transparent 50%);background-size:2px 1px"></div><svg style="left:58px;top:15px" width="16" height="14"><use href="#fclosed"/></svg><span class="li" style="left:75px;top:16px;letter-spacing:-0.307px">PCaloHits_SimG4Object_EcalHitsEE.</span><div class="" style="left:47px;top:41px;width:11px;height:1px;background-image:linear-gradient(90deg,#808080 50%,transparent 50%);background-size:2px 1px"></div><svg style="left:58px;top:33px" width="16" height="14"><use href="#fclosed"/></svg><span class="li" style="left:75px;top:34px;letter-spacing:-0.307px">PCaloHits_SimG4Object_EcalHitsES.</span><div class="" style="left:47px;top:59px;width:11px;height:1px;background-image:linear-gradient(90deg,#808080 50%,transparent 50%);background-size:2px 1px"></div><svg style="left:58px;top:51px" width="16" height="14"><use href="#fclosed"/></svg><span class="li" style="left:75px;top:52px;letter-spacing:-0.292px">PCaloHits_SimG4Object_HcalHits.</span><div class="" style="left:47px;top:77px;width:11px;height:1px;background-image:linear-gradient(90deg,#808080 50%,transparent 50%);background-size:2px 1px"></div><svg style="left:58px;top:69px" width="16" height="14"><use href="#fclosed"/></svg><span class="li" style="left:75px;top:70px;letter-spacing:-0.277px">PSimHits_SimG4Object_MuonCSCHits.</span><div class="" style="left:47px;top:95px;width:11px;height:1px;background-image:linear-gradient(90deg,#808080 50%,transparent 50%);background-size:2px 1px"></div><svg style="left:58px;top:87px" width="16" height="14"><use href="#fclosed"/></svg><span class="li" style="left:75px;top:88px;letter-spacing:-0.33px">PSimHits_SimG4Object_MuonDTHits.</span><div class="" style="left:47px;top:113px;width:11px;height:1px;background-image:linear-gradient(90deg,#808080 50%,transparent 50%);background-size:2px 1px"></div><svg style="left:58px;top:105px" width="16" height="14"><use href="#fclosed"/></svg><span class="li" style="left:75px;top:106px;letter-spacing:-0.307px">PSimHits_SimG4Object_MuonRPCHits.</span><div class="" style="left:47px;top:131px;width:11px;height:1px;background-image:linear-gradient(90deg,#808080 50%,transparent 50%);background-size:2px 1px"></div><svg style="left:58px;top:123px" width="16" height="14"><use href="#fclosed"/></svg><span class="li" style="left:75px;top:124px;letter-spacing:-0.309px">PSimHits_SimG4Object_TrackerHitsPixelBarrelHighTof.</span><div class="" style="left:47px;top:149px;width:11px;height:1px;background-image:linear-gradient(90deg,#808080 50%,transparent 50%);background-size:2px 1px"></div><svg style="left:58px;top:141px" width="16" height="14"><use href="#fclosed"/></svg><span class="li" style="left:75px;top:142px;letter-spacing:-0.306px">PSimHits_SimG4Object_TrackerHitsPixelBarrelLowTof.</span><div class="" style="left:47px;top:167px;width:11px;height:1px;background-image:linear-gradient(90deg,#808080 50%,transparent 50%);background-size:2px 1px"></div><svg style="left:58px;top:159px" width="16" height="14"><use href="#fclosed"/></svg><span class="li" style="left:75px;top:160px;letter-spacing:-0.318px">PSimHits_SimG4Object_TrackerHitsPixelEndcapHighTof.</span><div class="" style="left:47px;top:185px;width:11px;height:1px;background-image:linear-gradient(90deg,#808080 50%,transparent 50%);background-size:2px 1px"></div><svg style="left:58px;top:177px" width="16" height="14"><use href="#fclosed"/></svg><span class="li" style="left:75px;top:178px;letter-spacing:-0.315px">PSimHits_SimG4Object_TrackerHitsPixelEndcapLowTof.</span><div class="" style="left:42px;top:181px;width:9px;height:9px;background:#fff;border:1px solid #808080"></div><div class="" style="left:44px;top:185px;width:5px;height:1px;background:#000"></div><div class="" style="left:65px;top:192px;width:1px;height:11px;background-image:linear-gradient(#808080 50%,transparent 50%);background-size:1px 2px"></div><div class="" style="left:65px;top:203px;width:11px;height:1px;background-image:linear-gradient(90deg,#808080 50%,transparent 50%);background-size:2px 1px"></div><svg style="left:75px;top:195px" width="18" height="15"><use href="#fopen"/></svg><div class="" style="left:94px;top:197px;width:277px;height:13px;background:#000080"></div><span class="li" style="left:95px;top:196px;color:#fff;letter-spacing:-0.31px">PSimHits_SimG4Object_TrackerHitsPixelEndcapLowTof.obj</span><div class="" style="left:47px;top:221px;width:11px;height:1px;background-image:linear-gradient(90deg,#808080 50%,transparent 50%);background-size:2px 1px"></div><svg style="left:58px;top:213px" width="16" height="14"><use href="#fclosed"/></svg><span class="li" style="left:75px;top:214px;letter-spacing:-0.315px">PSimHits_SimG4Object_TrackerHitsTECHighTof.</span><div class="" style="left:47px;top:239px;width:11px;height:1px;background-image:linear-gradient(90deg,#808080 50%,transparent 50%);background-size:2px 1px"></div><svg style="left:58px;top:231px" width="16" height="14"><use href="#fclosed"/></svg><span class="li" style="left:75px;top:232px;letter-spacing:-0.312px">PSimHits_SimG4Object_TrackerHitsTECLowTof.</span><div class="" style="left:47px;top:257px;width:11px;height:1px;background-image:linear-gradient(90deg,#808080 50%,transparent 50%);background-size:2px 1px"></div><svg style="left:58px;top:249px" width="16" height="14"><use href="#fclosed"/></svg><span class="li" style="left:75px;top:250px;letter-spacing:-0.329px">PSimHits_SimG4Object_TrackerHitsTIBHighTof.</span><div class="" style="left:47px;top:275px;width:11px;height:1px;background-image:linear-gradient(90deg,#808080 50%,transparent 50%);background-size:2px 1px"></div><svg style="left:58px;top:267px" width="16" height="14"><use href="#fclosed"/></svg><span class="li" style="left:75px;top:268px;letter-spacing:-0.327px">PSimHits_SimG4Object_TrackerHitsTIBLowTof.</span><div class="" style="left:47px;top:293px;width:11px;height:1px;background-image:linear-gradient(90deg,#808080 50%,transparent 50%);background-size:2px 1px"></div><svg style="left:58px;top:285px" width="16" height="14"><use href="#fclosed"/></svg><span class="li" style="left:75px;top:286px;letter-spacing:-0.32px">PSimHits_SimG4Object_TrackerHitsTIDHighTof.</span><div class="" style="left:47px;top:311px;width:11px;height:1px;background-image:linear-gradient(90deg,#808080 50%,transparent 50%);background-size:2px 1px"></div><svg style="left:58px;top:303px" width="16" height="14"><use href="#fclosed"/></svg><span class="li" style="left:75px;top:304px;letter-spacing:-0.317px">PSimHits_SimG4Object_TrackerHitsTIDLowTof.</span><div class="" style="left:47px;top:329px;width:11px;height:1px;background-image:linear-gradient(90deg,#808080 50%,transparent 50%);background-size:2px 1px"></div><svg style="left:58px;top:321px" width="16" height="14"><use href="#fclosed"/></svg><span class="li" style="left:75px;top:322px;letter-spacing:-0.324px">PSimHits_SimG4Object_TrackerHitsTOBHighTof.</span><div class="" style="left:47px;top:347px;width:11px;height:1px;background-image:linear-gradient(90deg,#808080 50%,transparent 50%);background-size:2px 1px"></div><svg style="left:58px;top:339px" width="16" height="14"><use href="#fclosed"/></svg><span class="li" style="left:75px;top:340px;letter-spacing:-0.322px">PSimHits_SimG4Object_TrackerHitsTOBLowTof.</span><div class="" style="left:47px;top:365px;width:11px;height:1px;background-image:linear-gradient(90deg,#808080 50%,transparent 50%);background-size:2px 1px"></div><svg style="left:58px;top:357px" width="16" height="14"><use href="#fclosed"/></svg><span class="li" style="left:75px;top:358px;letter-spacing:-0.424px">edmHepMCProduct_FlatRandomEGunSource.</span><div class="" style="left:47px;top:383px;width:11px;height:1px;background-image:linear-gradient(90deg,#808080 50%,transparent 50%);background-size:2px 1px"></div><svg style="left:58px;top:375px" width="16" height="14"><use href="#fclosed"/></svg><span class="li" style="left:75px;top:376px;letter-spacing:-0.437px">edmHepMCProduct_VtxSmeared.</span></div>
<div class="" style="left:425px;top:615px;width:16px;height:386px;background-color:#fff;background-image:linear-gradient(45deg,#c3c3c3 25%,transparent 25%,transparent 75%,#c3c3c3 75%),linear-gradient(45deg,#c3c3c3 25%,transparent 25%,transparent 75%,#c3c3c3 75%);background-size:2px 2px;background-position:0 0,1px 1px"></div>
<div class="btn" style="left:425px;top:615px;width:16px;height:16px;"></div>
<svg style="left:429px;top:621px" width="8" height="4" shape-rendering="crispEdges"><path d="M0 4h7l-3.500 -4z" fill="#000"/></svg>
<div class="btn" style="left:425px;top:768px;width:16px;height:200px;"></div>
<div class="btn" style="left:425px;top:985px;width:16px;height:16px;"></div>
<svg style="left:429px;top:991px" width="8" height="4" shape-rendering="crispEdges"><path d="M0 0h7l-3.500 4z" fill="#000"/></svg>
<div class="" style="left:22px;top:1001px;width:403px;height:16px;background-color:#fff;background-image:linear-gradient(45deg,#c3c3c3 25%,transparent 25%,transparent 75%,#c3c3c3 75%),linear-gradient(45deg,#c3c3c3 25%,transparent 25%,transparent 75%,#c3c3c3 75%);background-size:2px 2px;background-position:0 0,1px 1px"></div>
<div class="btn" style="left:22px;top:1001px;width:16px;height:16px;"></div>
<svg style="left:28px;top:1005px" width="4" height="8" shape-rendering="crispEdges"><path d="M4 0v7l-4 -3.500z" fill="#000"/></svg>
<div class="btn" style="left:38px;top:1001px;width:294px;height:16px;"></div>
<div class="btn" style="left:409px;top:1001px;width:16px;height:16px;"></div>
<svg style="left:416px;top:1005px" width="4" height="8" shape-rendering="crispEdges"><path d="M0 0v7l4 -3.500z" fill="#000"/></svg>
<div class="" style="left:425px;top:1001px;width:16px;height:16px;background:#c3c3c3"></div>
<div class="sunk" style="left:444px;top:613px;width:458px;height:406px;"></div>
<div class="sunk2" style="left:445px;top:614px;width:456px;height:404px;"></div>
<div style="left:446px;top:615px;width:454px;height:402px;overflow:hidden;background:#fff"><svg style="left:4px;top:5px" width="15" height="15"><use href="#leaf"/></svg><span class="li" style="left:21px;top:5px;letter-spacing:-0.6px;margin-left:-1px;">@size</span><svg style="left:4px;top:24px" width="15" height="15"><use href="#leaf"/></svg><span class="li" style="left:21px;top:24px;">PSimHits_SimG4Object_TrackerHitsPixelEndcapLowTof.obj.<em style="font-style:normal;letter-spacing:-0.127px">theDetUnitId</em></span><svg style="left:4px;top:43px" width="15" height="15"><use href="#leafsel"/></svg><div style="left:21px;top:43px;width:350px;height:14px;background:#000080"></div><span class="li" style="left:21px;top:43px;color:#fff">PSimHits_SimG4Object_TrackerHitsPixelEndcapLowTof.obj.<em style="font-style:normal;letter-spacing:-0.327px">theEnergyLoss</em></span><svg style="left:4px;top:62px" width="15" height="15"><use href="#leaf"/></svg><span class="li" style="left:21px;top:62px;">PSimHits_SimG4Object_TrackerHitsPixelEndcapLowTof.obj.<em style="font-style:normal;letter-spacing:-0.072px">theEntryPoint.theVector.theX</em></span><svg style="left:4px;top:81px" width="15" height="15"><use href="#leaf"/></svg><span class="li" style="left:21px;top:81px;">PSimHits_SimG4Object_TrackerHitsPixelEndcapLowTof.obj.<em style="font-style:normal;letter-spacing:-0.072px">theEntryPoint.theVector.theY</em></span><svg style="left:4px;top:100px" width="15" height="15"><use href="#leaf"/></svg><span class="li" style="left:21px;top:100px;">PSimHits_SimG4Object_TrackerHitsPixelEndcapLowTof.obj.<em style="font-style:normal;letter-spacing:-0.05px">theEntryPoint.theVector.theZ</em></span><svg style="left:4px;top:119px" width="15" height="15"><use href="#leaf"/></svg><span class="li" style="left:21px;top:119px;">PSimHits_SimG4Object_TrackerHitsPixelEndcapLowTof.obj.<em style="font-style:normal;letter-spacing:-0.534px">thePabs</em></span><svg style="left:4px;top:138px" width="15" height="15"><use href="#leaf"/></svg><span class="li" style="left:21px;top:138px;">PSimHits_SimG4Object_TrackerHitsPixelEndcapLowTof.obj.<em style="font-style:normal;letter-spacing:-0.446px">theParticleType</em></span><svg style="left:4px;top:157px" width="15" height="15"><use href="#leaf"/></svg><span class="li" style="left:21px;top:157px;">PSimHits_SimG4Object_TrackerHitsPixelEndcapLowTof.obj.<em style="font-style:normal;letter-spacing:-0.125px">thePhiAtEntry</em></span><svg style="left:4px;top:176px" width="15" height="15"><use href="#leaf"/></svg><span class="li" style="left:21px;top:176px;">PSimHits_SimG4Object_TrackerHitsPixelEndcapLowTof.obj.<em style="font-style:normal;letter-spacing:-0.481px">theProcessType</em></span><svg style="left:4px;top:195px" width="15" height="15"><use href="#leaf"/></svg><span class="li" style="left:21px;top:195px;">PSimHits_SimG4Object_TrackerHitsPixelEndcapLowTof.obj.<em style="font-style:normal;letter-spacing:-0.192px">theSegment.theVector.theX</em></span><svg style="left:4px;top:214px" width="15" height="15"><use href="#leaf"/></svg><span class="li" style="left:21px;top:214px;">PSimHits_SimG4Object_TrackerHitsPixelEndcapLowTof.obj.<em style="font-style:normal;letter-spacing:-0.192px">theSegment.theVector.theY</em></span><svg style="left:4px;top:233px" width="15" height="15"><use href="#leaf"/></svg><span class="li" style="left:21px;top:233px;">PSimHits_SimG4Object_TrackerHitsPixelEndcapLowTof.obj.<em style="font-style:normal;letter-spacing:-0.167px">theSegment.theVector.theZ</em></span><svg style="left:4px;top:252px" width="15" height="15"><use href="#leaf"/></svg><span class="li" style="left:21px;top:252px;">PSimHits_SimG4Object_TrackerHitsPixelEndcapLowTof.obj.<em style="font-style:normal;letter-spacing:-0.258px">theThetaAtEntry</em></span><svg style="left:4px;top:271px" width="15" height="15"><use href="#leaf"/></svg><span class="li" style="left:21px;top:271px;">PSimHits_SimG4Object_TrackerHitsPixelEndcapLowTof.obj.<em style="font-style:normal;letter-spacing:-0.139px">theTof</em></span><svg style="left:4px;top:290px" width="15" height="15"><use href="#leaf"/></svg><span class="li" style="left:21px;top:290px;">PSimHits_SimG4Object_TrackerHitsPixelEndcapLowTof.obj.<em style="font-style:normal;letter-spacing:-0.443px">theTrackId</em></span></div>
<div class="sunk" style="left:20px;top:1022px;width:228px;height:19px;"></div>
<span class="li" style="left:26px;top:1024px;">16 Objects, 1 selected.</span>
<div class="sunk" style="left:249px;top:1022px;width:653px;height:19px;"></div>
<span class="li" style="left:254px;top:1024px;">PSimHits_SimG4Object_TrackerHitsPixelEndcapLowTof.obj.theEnergyLoss</span>
<svg style="left:888px;top:1026px" width="13" height="13"><path d="M1 13L13 1M5 13L13 5M9 13L13 9" stroke="#808080" stroke-width="1.2"/><path d="M2 13L13 2M6 13L13 6M10 13L13 10" stroke="#fff" stroke-width="1"/></svg>
</div></body></html>
